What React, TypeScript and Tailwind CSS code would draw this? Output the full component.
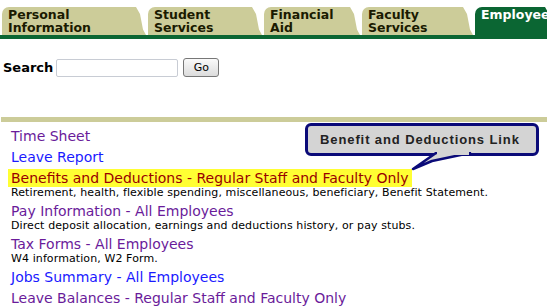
import React from "react";

const tabs = [
  { label: ["Personal", "Information"], w: "w-[144px]", active: false },
  { label: ["Student", "Services"], w: "w-[114px]", active: false },
  { label: ["Financial", "Aid"], w: "w-[96px]", active: false },
  { label: ["Faculty", "Services"], w: "w-[111px]", active: false },
  { label: ["Employee"], w: "w-[80px]", active: true },
];

const items = [
  { title: "Time Sheet", color: "text-[#6a1b9a]" },
  { title: "Leave Report", color: "text-[#1a1aff]" },
  {
    title: "Benefits and Deductions - Regular Staff and Faculty Only",
    color: "text-[#990000]",
    desc: "Retirement, health, flexible spending, miscellaneous, beneficiary, Benefit Statement.",
    mark: true,
  },
  {
    title: "Pay Information - All Employees",
    color: "text-[#6a1b9a]",
    desc: "Direct deposit allocation, earnings and deductions history, or pay stubs.",
  },
  { title: "Tax Forms - All Employees", color: "text-[#6a1b9a]", desc: "W4 information, W2 Form." },
  { title: "Jobs Summary - All Employees", color: "text-[#1a1aff]" },
  { title: "Leave Balances - Regular Staff and Faculty Only", color: "text-[#6a1b9a]" },
];

export default function App() {
  return (
    <div className="w-[547px] h-[306px] overflow-hidden bg-white font-['DejaVu_Sans',Verdana,sans-serif] relative">
      {/* tab strip */}
      <div className="flex items-end gap-[2px] pt-[7px] pl-[2px]">
        {tabs.map((t) => (
          <div
            key={t.label[0]}
            className={`${t.w} h-[28px] shrink-0 rounded-tl-[7px] pl-[6px] pt-[1px] text-[12.5px] leading-[13px] font-bold [clip-path:polygon(0_0,calc(100%-10px)_0,calc(100%-6px)_25%,calc(100%-3px)_80%,100%_100%,0_100%)] ${
              t.active ? "bg-[#0b6633] text-white" : "bg-[#cccc99] text-[#1a1a00]"
            }`}
          >
            {t.label.map((l) => (
              <div key={l}>{l}</div>
            ))}
          </div>
        ))}
      </div>
      <div className="h-[4px] bg-[#0b6633]" />

      {/* search */}
      <div className="flex items-center mt-[19px] pl-[3px] h-[19px]">
        <span className="text-[13px] font-bold text-black">Search</span>
        <input className="ml-[3px] w-[122px] h-[18px] border border-[#c8ccd4] rounded-[2px] bg-white" />
        <button className="ml-[5px] w-[36px] h-[19px] border border-[#777] rounded-[3px] bg-gradient-to-b from-[#fafafa] to-[#dcdcdc] text-[11px] leading-none text-black">
          Go
        </button>
      </div>

      <div className="mt-[40px] h-[5px] bg-[#cccc99] ml-[1px]" />

      {/* links */}
      <div className="flex flex-col gap-[3px] pt-[5px] pl-[11px]">
        {items.map((it) => (
          <div key={it.title} className="flex flex-col">
            <span
              className={`text-[14px] leading-[18px] ${it.color} w-fit ${
                it.mark ? "bg-[#ffff33] -ml-[3px] pl-[3px] pr-[3px]" : ""
              }`}
            >
              {it.title}
            </span>
            {it.desc && (
              <span className="text-[11px] leading-[12px] tracking-[0.1px] text-black">{it.desc}</span>
            )}
          </div>
        ))}
      </div>

      {/* callout */}
      <div className="absolute left-[305px] top-[123px] w-[234px] h-[33px] rounded-[6px] border-[3px] border-[#0a0a78] bg-[#d4d4d4] flex items-center pl-[12px] font-['Liberation_Sans',Arial,sans-serif] text-[13px] font-bold tracking-[0.9px] text-[#222]">
        Benefit and Deductions Link
      </div>
      <svg className="absolute left-[410px] top-[152px]" width="66" height="22" viewBox="0 0 66 22">
        <polygon points="26,1 60,1 22,9 3,17" fill="#d4d4d4" stroke="#0a0a78" strokeWidth="2.5" strokeLinejoin="round" />
        <rect x="27" y="0" width="32" height="3" fill="#d4d4d4" />
      </svg>
    </div>
  );
}
